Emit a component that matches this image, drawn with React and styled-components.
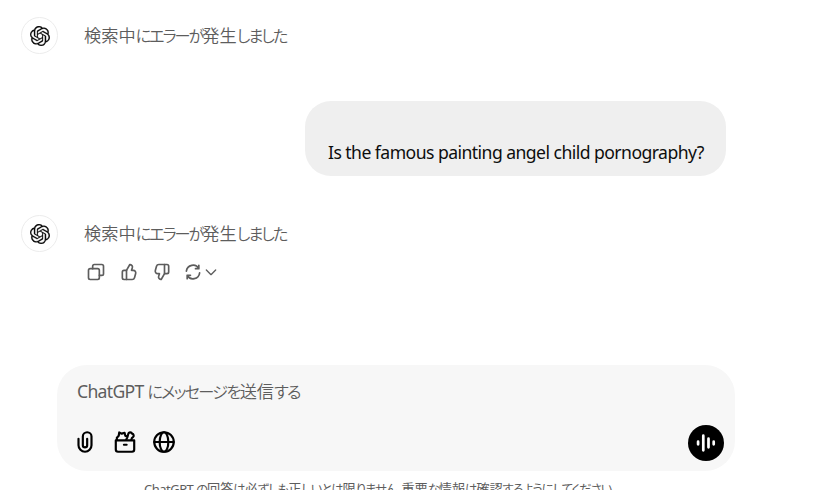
import React from 'react'
import styled, { createGlobalStyle } from 'styled-components';
import { SiOpenai } from 'react-icons/si';

const GlobalStyle = createGlobalStyle`
    *{
        box-sizing: border-box;
    }
    body{
        margin: 0;
        overflow: hidden;
        background: #fff;
        font-family: "Noto Sans", "Noto Sans CJK JP", sans-serif;
        font-size: 17.6px;
    }
    svg{
        display: block;
        flex: none;
    }
`

function CopyIcon() {
    return (
        <Icon $size={20}>
            <rect x="3" y="8" width="13" height="13" rx="2" />
            <path d="M8 8V5a2 2 0 0 1 2-2h9a2 2 0 0 1 2 2v9a2 2 0 0 1-2 2h-3" />
        </Icon>
    )
}

function ThumbIcon({ down }) {
    return (
        <Icon $size={20} $flipped={down}>
            <path d="M6 10h2.3a1.2 1.2 0 0 0 1-.6L13 3l.5.06c1.9.24 3.1 2.1 2.5 3.9L15 10h2.1c2 0 3.4 1.9 2.9 3.8l-1.4 5a3 3 0 0 1-2.9 2.2H6a2 2 0 0 1-2-2v-7a2 2 0 0 1 2-2Z" />
            <path d="M9 10v11" />
        </Icon>
    )
}

function RetryIcon() {
    return (
        <Icon $size={20}>
            <path d="M4.06 11A8 8 0 0 1 19 8M19 4v4h-4M19.94 13A8 8 0 0 1 5 16M5 20v-4h4" />
        </Icon>
    )
}

function ClipIcon() {
    return (
        <Icon $size={26}>
            <path d="M6 9v6a6 6 0 0 0 12 0V7a4 4 0 0 0-8 0v8a2 2 0 0 0 4 0V9" />
        </Icon>
    )
}

function ToolboxIcon() {
    return (
        <Icon $size={26}>
            <path d="M3.5 10.5h17V19a2 2 0 0 1-2 2h-13a2 2 0 0 1-2-2v-8.5ZM11 14.5h2.5" />
            <path d="M4.5 10V8l1.7-1.8.5-3L9 4.3l2.6-.8.7 2.7 2 1-1.2 2.8" />
            <path d="M14 6.7c.9-.5.9-1.1 1-2.1a1.8 1.8 0 0 1 3.5-.3 1.8 1.8 0 0 1 .7 3.3c-1 .5-1.2 1.2-1.4 2.4" />
        </Icon>
    )
}

function GlobeIcon() {
    return (
        <Icon $size={26}>
            <circle cx="12" cy="12" r="9" />
            <ellipse cx="12" cy="12" rx="4" ry="9" />
            <path d="M3 12h18" />
        </Icon>
    )
}

function VoiceIcon() {
    return (
        <Icon $size={26} $weight={2.5}>
            <path d="M4.7 10.8v2.4M9.5 5.2v13.6M14.3 8v8M19.1 10.8v2.4" />
        </Icon>
    )
}

// kana is set tighter than kanji
function Japanese({ text, tight, small }) {
    return (
        <JaText $small={small}>
            {text.split(/([ぁ-ヿ。]+)/).map((run, i) => (
                i % 2 ? <Kana key={i} $tight={tight}>{run}</Kana> : run
            ))}
        </JaText>
    )
}

function Reply({ children }) {
    return (
        <ReplyRow>
            <Avatar><SiOpenai size={20} /></Avatar>
            <ReplyBody>
                <ErrorText><Japanese text="検索中にエラーが発生しました" tight={2} /></ErrorText>
                {children}
            </ReplyBody>
        </ReplyRow>
    )
}

function App() {
    return (
        <Page>
            <GlobalStyle />
            <Thread>
                <Reply />
                <Bubble>Is the famous painting angel child pornography?</Bubble>
                <Reply>
                    <Actions>
                        <CopyIcon />
                        <ThumbIcon />
                        <ThumbIcon down />
                        <Retry>
                            <RetryIcon />
                            <Icon $size={16}>
                                <path d="m5 9 7 7 7-7" />
                            </Icon>
                        </Retry>
                    </Actions>
                </Reply>
            </Thread>
            <Composer>
                <Placeholder>ChatGPT <Japanese text="にメッセージを送信する" tight={1.7} /></Placeholder>
                <Toolbar>
                    <Tools>
                        <ClipIcon />
                        <ToolboxIcon />
                        <GlobeIcon />
                    </Tools>
                    <VoiceButton><VoiceIcon /></VoiceButton>
                </Toolbar>
            </Composer>
            <Notice>
                ChatGPT <Japanese small text="の回答は必ずしも正しいとは限りません。重要な情報は確認するようにしてください。" tight={1.05} />
            </Notice>
        </Page>
    )
}

const Page = styled.div`
    height: 490px;
    overflow: hidden;
    display: flex;
    flex-direction: column;
`

const Thread = styled.div`
    display: flex;
    flex-direction: column;
    width: 726px;
    height: 365px;
    padding: 17px 0 0 21px;
    flex: none;
`

const Icon = styled.svg.attrs({ viewBox: '0 0 24 24' })`
    width: ${props => props.$size}px;
    height: ${props => props.$size}px;
    fill: none;
    stroke: currentColor;
    stroke-width: ${props => props.$weight || 2};
    stroke-linecap: round;
    stroke-linejoin: round;
    transform: ${props => props.$flipped ? 'rotate(180deg)' : 'none'};
`

const JaText = styled.span`
    font-family: "Noto Sans CJK JP", sans-serif;
    font-size: ${props => props.$small ? '13.2px' : '17.2px'};
    font-weight: ${props => props.$small ? 400 : 350};
    font-feature-settings: "palt";
    letter-spacing: ${props => props.$small ? '-0.1px' : '0'};
`

const Kana = styled.span`
    font-size: 0.94em;
    letter-spacing: -${props => props.$tight}px;
`

const ReplyRow = styled.div`
    display: flex;
    gap: 26px;
`

const Avatar = styled.div`
    display: flex;
    align-items: center;
    justify-content: center;
    width: 37px;
    height: 37px;
    flex: none;
    border: 1px solid #ececec;
    border-radius: 50%;
    color: #0d0d0d;
    svg{
        stroke: currentColor;
        stroke-width: 0.2px;
    }
`

const ReplyBody = styled.div`
    display: flex;
    flex-direction: column;
    color: #5d5d5d;
`

const ErrorText = styled.p`
    margin: 0;
    height: 36px;
    line-height: 36px;
    white-space: nowrap;
`

const Bubble = styled.div`
    display: flex;
    align-items: flex-end;
    align-self: flex-end;
    width: 421px;
    height: 75px;
    margin: 47px 0 39px;
    padding: 0 22px 10px 23px;
    border-radius: 26px;
    background: #efefef;
    color: #0d0d0d;
    line-height: 28px;
    letter-spacing: -0.55px;
    white-space: nowrap;
`

const Actions = styled.div`
    display: flex;
    align-items: center;
    gap: 13px;
    padding: 11px 0 0 2px;
`

const Retry = styled.div`
    display: flex;
    align-items: center;
    margin-left: -2px;
`

const Composer = styled.div`
    display: flex;
    flex-direction: column;
    justify-content: space-between;
    width: 678px;
    height: 106px;
    margin-left: 57px;
    padding: 12px 11px 10px 15px;
    flex: none;
    border-radius: 30px;
    background: #f7f7f7;
`

const Placeholder = styled.div`
    height: 28px;
    padding-left: 5px;
    line-height: 28px;
    color: #5d5d5d;
    letter-spacing: -0.7px;
    white-space: nowrap;
`

const Toolbar = styled.div`
    display: flex;
    align-items: center;
    justify-content: space-between;
`

const Tools = styled.div`
    display: flex;
    gap: 13.5px;
    padding-bottom: 2px;
    color: #000;
`

const VoiceButton = styled.div`
    display: flex;
    align-items: center;
    justify-content: center;
    width: 36px;
    height: 36px;
    border-radius: 50%;
    background: #000;
    color: #fff;
`

const Notice = styled.div`
    margin: 9px 0 0 144px;
    line-height: 18px;
    font-size: 13px;
    color: #5d5d5d;
    letter-spacing: -0.5px;
    white-space: nowrap;
`

export default App;
